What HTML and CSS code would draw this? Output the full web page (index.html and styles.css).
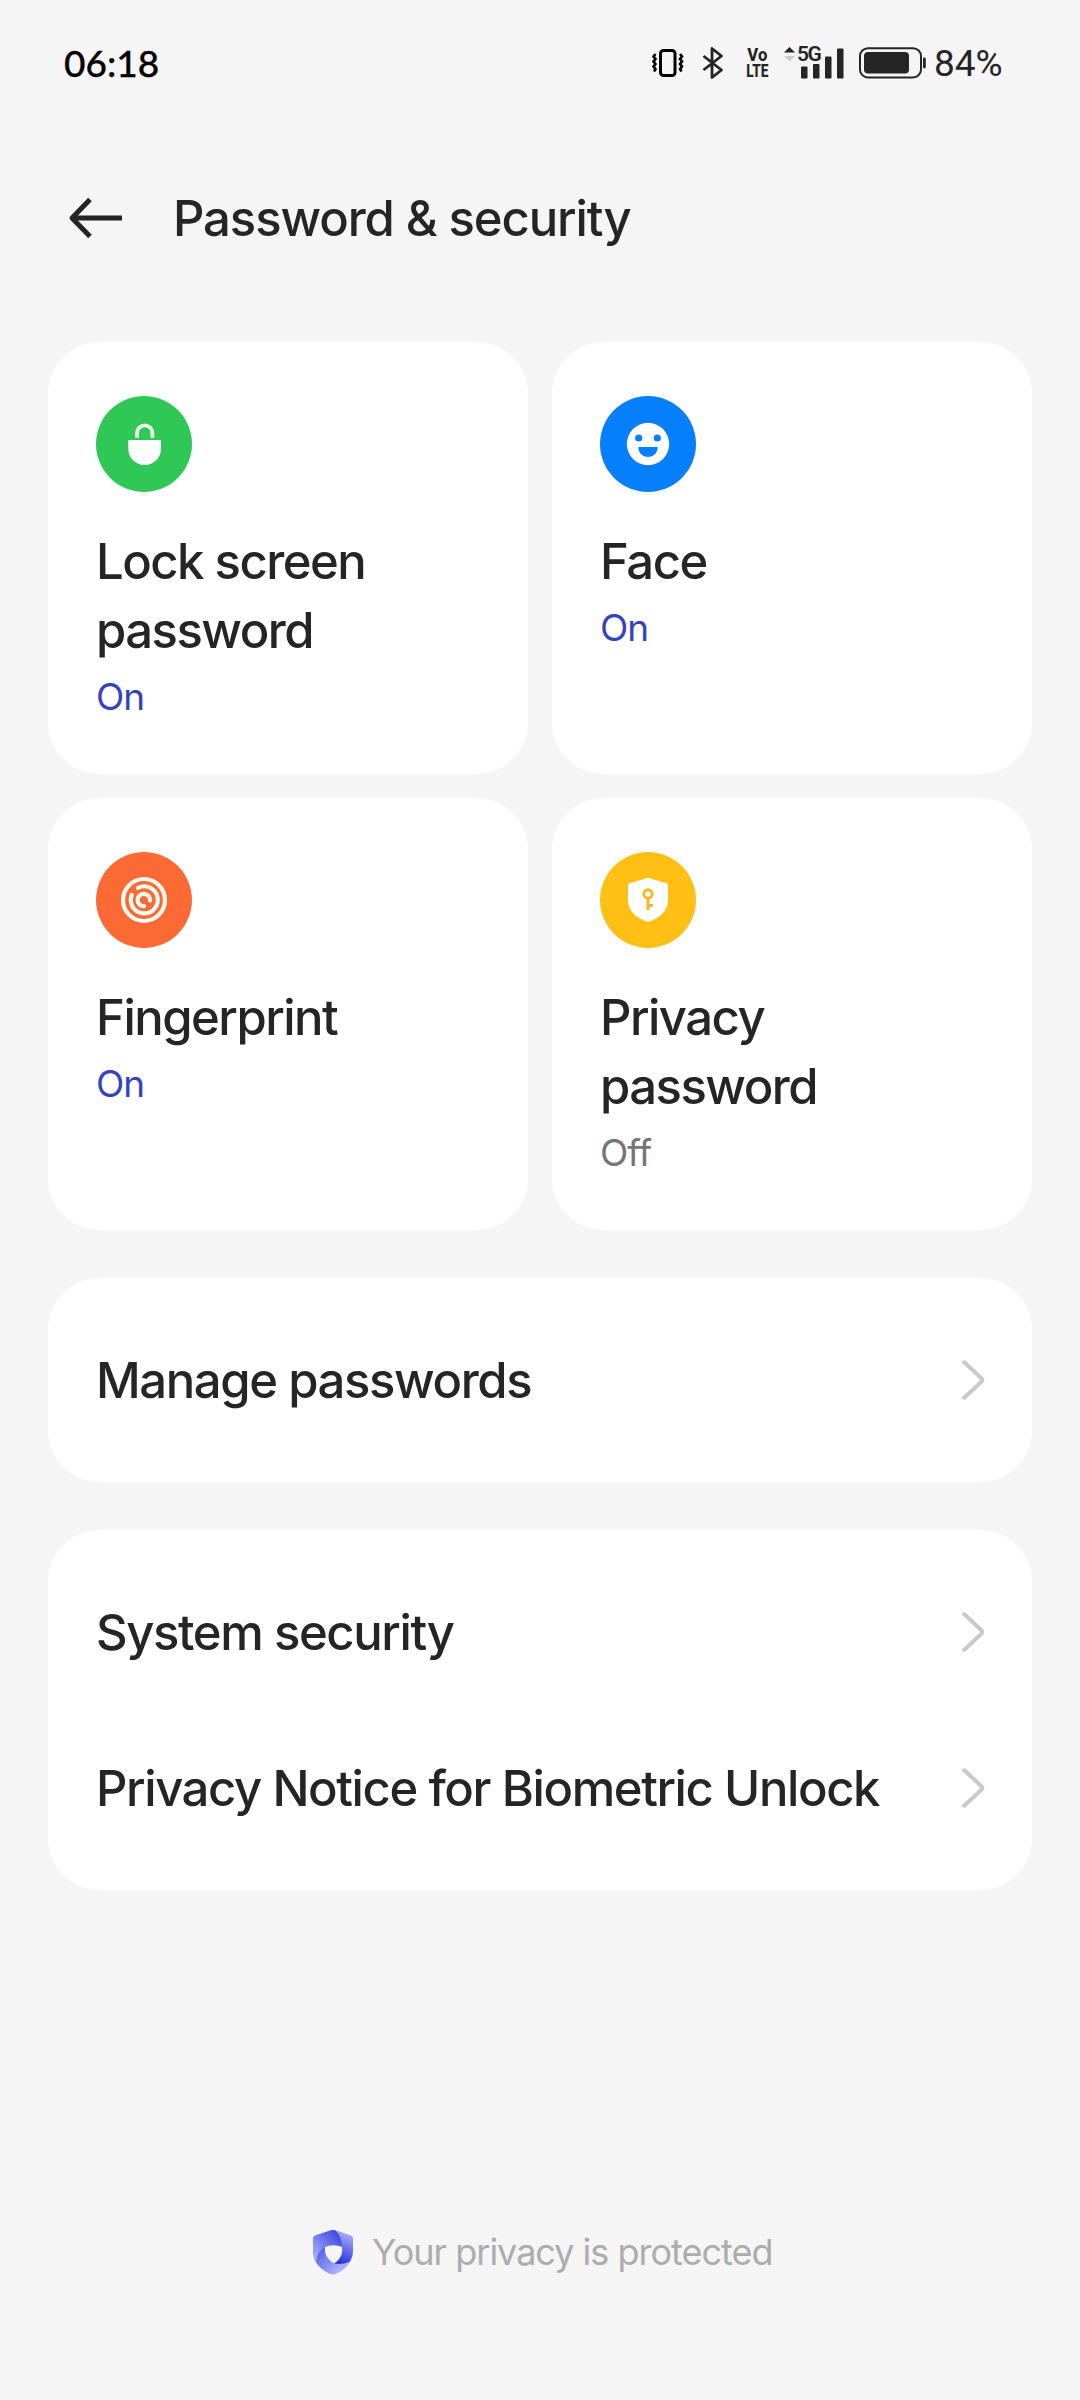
FILE: index.html
```html
<!DOCTYPE html>
<html lang="en">
<head>
    <meta charset="UTF-8">
    <meta name="viewport" content="width=device-width, initial-scale=1.0">
    <title>Password &amp; security</title>
    <link rel="stylesheet" href="styles.css">
</head>
<body>
    <!-- Status bar -->
    <div class="status-bar">
        <span class="time">06:18</span>
        <div class="status-icons">
            <svg class="icon-vibrate" width="32" height="32" viewBox="0 0 32 32" fill="none" stroke="#000">
                <rect x="8.5" y="3.5" width="14.5" height="25" rx="3" stroke-width="3"/>
                <path d="M3.500 7 1.500 9.500 3.500 12 1.500 14.500 3.500 17 1.500 19.500 3.500 22 2 24.500M28 7 30 9.500 28 12 30 14.500 28 17 30 19.500 28 22 29.500 24.500" stroke-width="2.600"/>
            </svg>
            <svg class="icon-bluetooth" width="22" height="34" viewBox="0 0 22 34" fill="none" stroke="#252525" stroke-width="2.800">
                <path d="M1.500 10 19.500 24 10 31.500V2.500L19.500 10 1.500 24" stroke-linejoin="round"/>
            </svg>
            <div class="volte"><span class="vo">Vo</span><span class="lte">LTE</span></div>
            <div class="signal">
                <svg width="62" height="34" viewBox="0 0 62 34" fill="#252525">
                    <path d="M6.500 1 12 6.500H1z"/>
                    <path d="M6.500 15.500 12 10H1z" fill="#ccc"/>
                    <rect x="18" y="20.500" width="6.500" height="12" rx="1"/>
                    <rect x="30" y="18" width="6.500" height="14.500" rx="1"/>
                    <rect x="42" y="10.500" width="6.500" height="22" rx="1"/>
                    <rect x="54" y="2.500" width="6.500" height="30" rx="1"/>
                </svg>
                <span class="network">5G</span>
            </div>
            <svg class="icon-battery" width="68" height="32" viewBox="0 0 68 32">
                <rect x="1" y="1.200" width="61" height="29.300" rx="8" fill="none" stroke="#252525" stroke-width="2"/>
                <rect x="5" y="5" width="45" height="21.500" rx="4" fill="#252525"/>
                <rect x="64" y="10.500" width="2.800" height="11" rx="1.400" fill="#252525"/>
            </svg>
            <span class="battery-text">84%</span>
        </div>
    </div>

    <!-- Header -->
    <div class="header">
        <svg class="back" width="54" height="44" viewBox="0 0 54 44" fill="none" stroke="#252525" stroke-width="5">
            <path d="M54 22H4M22 3.500 4 22 22 40.500" stroke-linejoin="round"/>
        </svg>
        <h1>Password &amp; security</h1>
    </div>

    <div class="container">
        <!-- Unlock methods -->
        <div class="grid">
            <div class="card">
                <svg class="card-icon" viewBox="0 0 96 96">
                    <circle cx="48" cy="48" r="48" fill="#2fc755"/>
                    <path d="M41 42v-5a7.700 7.700 0 0 1 15.400 0v5" fill="none" stroke="#eafbea" stroke-width="3.800"/>
                    <path d="M32.300 44H65v9a16.300 16 0 0 1-32.700 0z" fill="#fff"/>
                </svg>
                <h2>Lock screen password</h2>
                <p class="on">On</p>
            </div>
            <div class="card">
                <svg class="card-icon" viewBox="0 0 96 96">
                    <circle cx="48" cy="48" r="48" fill="#067ffd"/>
                    <circle cx="48" cy="48" r="21.200" fill="#fff"/>
                    <circle cx="38.700" cy="42" r="3.600" fill="#067ffd"/>
                    <circle cx="57.300" cy="42" r="3.600" fill="#067ffd"/>
                    <path d="M38.300 51h19.400c0 13.300-19.400 13.300-19.400 0z" fill="#067ffd"/>
                </svg>
                <h2>Face</h2>
                <p class="on">On</p>
            </div>
            <div class="card">
                <svg class="card-icon" viewBox="0 0 96 96">
                    <circle cx="48" cy="48" r="48" fill="#fb6a35"/>
                    <g fill="none" stroke="#fff8ef" stroke-width="4.200" stroke-linecap="round">
                        <circle cx="48" cy="48" r="21"/>
                        <path d="M35.700 43A13.500 13.500 0 1 0 42 35.900"/>
                        <path d="M54 48.500A6.200 6.200 0 1 0 48 54.200"/>
                    </g>
                </svg>
                <h2>Fingerprint</h2>
                <p class="on">On</p>
            </div>
            <div class="card">
                <svg class="card-icon" viewBox="0 0 96 96">
                    <circle cx="48" cy="48" r="48" fill="#ffbf14"/>
                    <path d="M46.500 26.200Q48 25.600 49.500 26.200L66.500 31.300Q68 31.800 68 33.500V48C68 60 59 65.500 49.500 69.600Q48 70.200 46.500 69.600C37 65.500 28 60 28 48V33.500Q28 31.800 29.500 31.300z" fill="#fff"/>
                    <g fill="none" stroke="#f5b822" stroke-width="3">
                        <circle cx="48" cy="42" r="4.200"/>
                        <path d="M48 46v12M48 53.500h5"/>
                    </g>
                </svg>
                <h2>Privacy password</h2>
                <p>Off</p>
            </div>
        </div>

        <div class="list">
            <div class="row">
                <span>Manage passwords</span>
                <svg class="chevron" viewBox="0 0 26 44"><path d="M3 3 21.500 20.300Q23 22 21.500 23.700L3 41"/></svg>
            </div>
        </div>

        <div class="list">
            <div class="row">
                <span>System security</span>
                <svg class="chevron" viewBox="0 0 26 44"><path d="M3 3 21.500 20.300Q23 22 21.500 23.700L3 41"/></svg>
            </div>
            <div class="row">
                <span>Privacy Notice for Biometric Unlock</span>
                <svg class="chevron" viewBox="0 0 26 44"><path d="M3 3 21.500 20.300Q23 22 21.500 23.700L3 41"/></svg>
            </div>
        </div>
    </div>

    <!-- Footer -->
    <div class="footer">
        <svg width="42" height="46" viewBox="0 0 42 46">
            <defs>
                <linearGradient id="top" x1="0" y1="1" x2="1" y2="0">
                    <stop offset="0" stop-color="#b3b9fb"/>
                    <stop offset="1" stop-color="#2e3be0"/>
                </linearGradient>
                <linearGradient id="right" x1="0.600" y1="0" x2="0.400" y2="1">
                    <stop offset="0" stop-color="#b0b6fb"/>
                    <stop offset="1" stop-color="#2633dc"/>
                </linearGradient>
                <linearGradient id="bottom" x1="0" y1="0.300" x2="0.600" y2="1">
                    <stop offset="0" stop-color="#3945e2"/>
                    <stop offset="1" stop-color="#b0b6fb"/>
                </linearGradient>
            </defs>
            <path d="M18.500 1.400Q21 .4 23.500 1.400L39 6.800Q41 7.600 41 10V21C41 33 34 41 23 45.200Q21 46 19 45.200C8 41 1 33 1 21V10Q1 7.600 3 6.800z" fill="url(#bottom)"/>
            <path d="M23 1.200 39 6.800Q41 7.600 41 10V21Q41 27 38 32.500 32 36 22 34.500C28 31 31 25 30 18Q30 9 23 1.200z" fill="url(#right)"/>
            <path d="M18.500 1.400Q21 .4 23.500 1.400 30 8 30 18 22 14.500 13 18 4.500 23 4.500 32.500Q1 27 1 21V10Q1 7.600 3 6.800z" fill="url(#top)"/>
            <path d="M13 18Q21.500 14.300 30 18 31.500 28 22 34.500 11.500 28 13 18z" fill="#f5f5f5"/>
        </svg>
        <span>Your privacy is protected</span>
    </div>
</body>
</html>
```
FILE: styles.css
```css
* {
    box-sizing: border-box;
}
body {
    font-family: Inter, Roboto, sans-serif;
    background-color: #f5f5f5;
    color: #252525;
    margin: 0;
    height: 2400px;
    display: flex;
    flex-direction: column;
}
h1, h2, p {
    margin: 0;
}
svg {
    display: block;
    flex-shrink: 0;
}

/* Status bar */
.status-bar {
    height: 128px;
    padding: 0 76px 2px 64px;
    display: flex;
    align-items: center;
    justify-content: space-between;
}
.time {
    padding-bottom: 2px;
    font-family: Lato, sans-serif;
    font-size: 37px;
    font-weight: 500;
    color: #000;
    -webkit-text-stroke: 0.3px #000;
}
.status-icons {
    display: flex;
    align-items: center;
}
.icon-bluetooth {
    margin-left: 18px;
}
.volte {
    margin-left: 22px;
    width: 23px;
    font-family: Roboto, sans-serif;
    font-size: 19px;
    font-weight: 800;
    line-height: 16px;
    display: flex;
    flex-direction: column;
    align-items: center;
}
.vo {
    transform: scaleX(0.88);
}
.lte {
    transform: scaleX(0.72);
}
.signal {
    position: relative;
    margin-left: 14px;
}
.network {
    position: absolute;
    left: 14px;
    top: -1px;
    font-family: Roboto, sans-serif;
    font-size: 21px;
    font-weight: 600;
    line-height: 18px;
    letter-spacing: -1.5px;
}
.icon-battery {
    margin-left: 14px;
}
.battery-text {
    margin-left: 7px;
    width: 70px;
    font-family: Roboto, sans-serif;
    font-size: 37px;
}

/* Header */
.header {
    height: 180px;
    padding-left: 68px;
    display: flex;
    align-items: center;
}
h1 {
    margin-left: 51px;
    font-size: 49px;
    font-weight: 500;
    letter-spacing: -1.1px;
}

.container {
    padding: 34px 48px 0;
    display: flex;
    flex-direction: column;
    gap: 48px;
}
.grid {
    display: grid;
    grid-template-columns: 1fr 1fr;
    gap: 24px;
}
.card {
    height: 432px;
    padding: 54px 48px;
    background: #fff;
    border-radius: 52px;
}
.card-icon {
    width: 96px;
    height: 96px;
}
h2 {
    width: 300px;
    margin-top: 35px;
    font-size: 49px;
    font-weight: 500;
    line-height: 69px;
    letter-spacing: -1.5px;
}
.card p {
    margin-top: 8px;
    font-size: 37px;
    line-height: 48px;
    letter-spacing: -1px;
    color: #757575;
}
.card .on {
    color: #3443bd;
}

/* Lists */
.list {
    padding: 24px 46px 24px 48px;
    background: #fff;
    border-radius: 52px;
}
.row {
    height: 156px;
    display: flex;
    align-items: center;
    justify-content: space-between;
    font-size: 49px;
    font-weight: 500;
    letter-spacing: -1.4px;
    white-space: nowrap;
}
.chevron {
    width: 26px;
    height: 44px;
    fill: none;
    stroke: #cacaca;
    stroke-width: 4;
}

/* Footer */
.footer {
    margin-top: auto;
    height: 296px;
    padding-left: 312px;
    display: flex;
    align-items: center;
    gap: 18px;
    font-size: 36px;
    letter-spacing: -1px;
    color: #acacac;
}
```
